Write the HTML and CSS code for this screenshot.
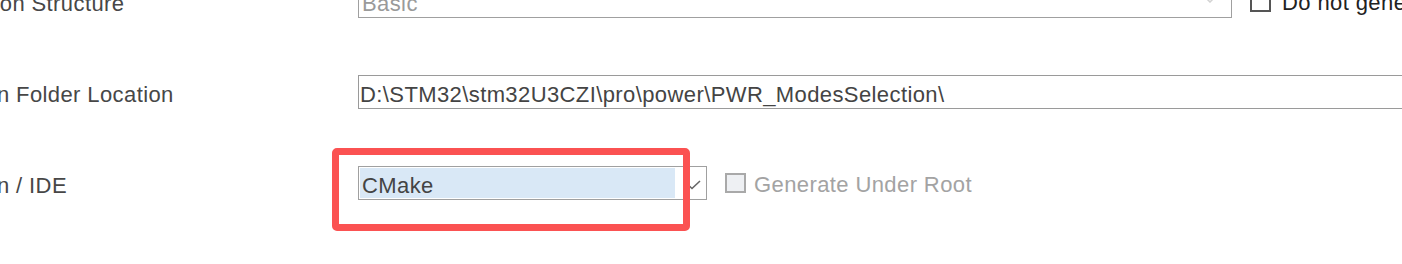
FILE: index.html
```html
<!DOCTYPE html>
<html>
<head>
<meta charset="utf-8">
<link rel="stylesheet" href="styles.css">
</head>
<body>
<div class="viewport">
  <div class="form">
    <div class="row row-first">
      <div class="label">Application Structure</div>
      <div class="combo combo-wide disabled">
        <div class="combo-value">Basic</div>
        <div class="combo-arrow">
          <svg width="16" height="9" viewBox="0 0 16 9"><path d="M1 1 L8 8 L15 1" fill="none" stroke="#d2d2d2" stroke-width="1.5"/></svg>
        </div>
      </div>
      <label class="check check-main">
        <span class="box"></span>
        <span class="check-text">Do not generate the main()</span>
      </label>
    </div>
    <div class="row">
      <div class="label">Toolchain Folder Location</div>
      <div class="field">D:\STM32\stm32U3CZI\pro\power\PWR_ModesSelection\</div>
    </div>
    <div class="row">
      <div class="label">Toolchain / IDE</div>
      <div class="combo combo-ide">
        <div class="combo-value selected">CMake</div>
        <div class="combo-arrow">
          <svg width="18" height="10" viewBox="0 0 18 10"><path d="M1 1 L9 8.5 L17 1" fill="none" stroke="#666" stroke-width="1.6"/></svg>
        </div>
      </div>
      <label class="check check-root disabled">
        <span class="box"></span>
        <span class="check-text">Generate Under Root</span>
      </label>
    </div>
  </div>
  <div class="highlight-frame"></div>
</div>
</body>
</html>
```

FILE: styles.css
```css
html, body {
  margin: 0;
  padding: 0;
  background: #ffffff;
}

.viewport {
  position: relative;
  width: 1402px;
  height: 264px;
  overflow: hidden;
  font-family: "Liberation Sans", Arial, sans-serif;
  font-size: 22px;
  letter-spacing: 0.4px;
  color: #444444;
}

.form {
  display: flex;
  flex-direction: column;
  gap: 57px;
  margin-left: -87px;
  margin-top: -16px;
}

.row {
  display: flex;
  align-items: center;
  height: 34px;
  white-space: nowrap;
}

.label {
  width: 445px;
  flex: none;
  color: #474747;
  padding-top: 5px;
}

.combo {
  box-sizing: border-box;
  height: 34px;
  border: 1px solid #a0a0a0;
  display: flex;
  align-items: stretch;
  padding: 1px;
  background: #ffffff;
  flex: none;
}

.combo-wide {
  width: 874px;
}

.combo-ide {
  width: 349px;
}

.combo-value {
  flex: 1;
  display: flex;
  align-items: center;
  padding-left: 2px;
  padding-top: 5px;
}

.combo-value.selected {
  flex: none;
  width: 313px;
  background: #d9e8f6;
  color: #444444;
}

.combo.disabled .combo-value {
  color: #9a9a9a;
}

.combo-arrow {
  flex: 1;
  display: flex;
  align-items: center;
  justify-content: flex-start;
}

.combo-wide .combo-arrow {
  flex: none;
  width: 22px;
  align-items: flex-start;
  padding-top: 8px;
  padding-right: 6px;
}

.combo-ide .combo-arrow {
  padding-left: 8px;
  padding-top: 4px;
}

.field {
  box-sizing: border-box;
  height: 34px;
  width: 1200px;
  flex: none;
  border: 1px solid #9a9a9a;
  padding: 5px 0 0 1px;
  display: flex;
  align-items: center;
  color: #444444;
}

.check {
  display: flex;
  align-items: center;
  flex: none;
}

.box {
  box-sizing: border-box;
  width: 21px;
  height: 21px;
  border: 2px solid #555555;
  background: #ffffff;
  flex: none;
}

.check-main {
  margin-left: 18px;
}

.check-main .check-text {
  margin-left: 11px;
  color: #222222;
  padding-top: 3px;
}

.check-root {
  margin-left: 18px;
}

.check-root .box {
  height: 20px;
  border-color: #a9a9a9;
  background: #eef0f3;
}

.check-root .check-text {
  margin-left: 8px;
  color: #a3a3a3;
  padding-top: 3px;
}

.highlight-frame {
  position: absolute;
  left: 332px;
  top: 148px;
  width: 358px;
  height: 83px;
  box-sizing: border-box;
  border: 7px solid #fb5252;
  border-radius: 5px;
}
```
